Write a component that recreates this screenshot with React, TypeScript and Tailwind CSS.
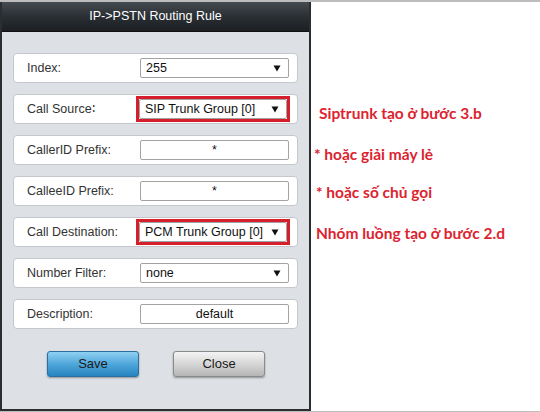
import type { ReactNode } from 'react';

type Row = {
  label: string;
  value: string;
  kind: 'select' | 'text';
  marked?: boolean;
};

const rows: Row[] = [
  { label: 'Index:', value: '255', kind: 'select' },
  { label: 'Call Source\u2236', value: 'SIP Trunk Group [0]', kind: 'select', marked: true },
  { label: 'CallerID Prefix:', value: '*', kind: 'text' },
  { label: 'CalleeID Prefix:', value: '*', kind: 'text' },
  { label: 'Call Destination:', value: 'PCM Trunk Group [0]', kind: 'select', marked: true },
  { label: 'Number Filter:', value: 'none', kind: 'select' },
  { label: 'Description:', value: 'default', kind: 'text' },
];

function Arrow() {
  return (
    <svg width="8" height="7" viewBox="0 0 8 7" className="shrink-0">
      <path d="M0.5 0.5 H7.5 L4 6.5 Z" fill="#111" />
    </svg>
  );
}

function Field({ row }: { row: Row }) {
  const box = 'h-[20px] w-[149px] bg-white border border-[#a3a3a3] rounded-[2px] flex items-center text-[12.5px] text-[#111]';
  let inner: ReactNode;
  if (row.kind === 'select') {
    inner = (
      <div className={`${box} pl-[5px] pr-[7px] justify-between`}>
        <span>{row.value}</span>
        <Arrow />
      </div>
    );
  } else {
    inner = <div className={`${box} justify-center`}>{row.value}</div>;
  }
  if (row.marked) {
    return (
      <div className="-ml-[4px] border-[3px] border-[#d61f2c]">
        <div className="[&>div]:w-[148px]">{inner}</div>
      </div>
    );
  }
  return inner;
}

const notes = [
  { text: 'Siptrunk tạo ở bước 3.b', mt: 'mt-[101px]', ml: 'ml-[8px]' },
  { text: '* hoặc giải máy lẻ', mt: 'mt-[21px]', ml: 'ml-[3px]' },
  { text: '* hoặc số chủ gọi', mt: 'mt-[18px]', ml: 'ml-[5px]' },
  { text: 'Nhóm luồng tạo ở bước 2.d', mt: 'mt-[21px]', ml: 'ml-[5px]' },
];

export default function App() {
  return (
    <div className="w-[540px] h-[412px] bg-white overflow-hidden flex flex-col" style={{ fontFamily: 'Arial, "Liberation Sans", sans-serif' }}>
      <div className="h-[2px] bg-[#bdbdbd] shrink-0" />
      <div className="flex flex-1 min-h-0">
        {/* dialog */}
        <div className="w-[311px] h-[409px] border-x-2 border-b-2 border-[#2b2e31] bg-[#dde1e5] flex flex-col shrink-0">
          <div className="h-[30px] bg-gradient-to-b from-[#464b51] via-[#2a2f34] to-[#1b1f23] flex items-center justify-center text-white text-[12.5px] border-b border-[#111]">
            IP-&gt;PSTN Routing Rule
          </div>
          <div className="flex flex-col gap-[11px] px-[11px] pt-[21px]">
            {rows.map((r) => (
              <div key={r.label} className="h-[30px] bg-white border border-[#c4c8cc] rounded-[4px] flex items-center pl-[13px]">
                <div className="w-[113px] text-[12.5px] text-[#333]">{r.label}</div>
                <Field row={r} />
              </div>
            ))}
          </div>
          <div className="flex pl-[45px] gap-[34px] mt-[22px]">
            <button className="w-[92px] h-[26px] rounded-[3px] border border-[#2a6f9f] bg-gradient-to-b from-[#8fd0f2] via-[#4ea7da] to-[#2784c0] text-[13px] text-[#1a1a1a] shadow-[0_1px_2px_rgba(0,0,0,0.35)]">
              Save
            </button>
            <button className="w-[92px] h-[26px] rounded-[3px] border border-[#8a8a8a] bg-gradient-to-b from-[#f4f4f4] via-[#d6d6d6] to-[#b5b5b5] text-[13px] text-[#1a1a1a] shadow-[0_1px_2px_rgba(0,0,0,0.35)]">
              Close
            </button>
          </div>
        </div>
        {/* notes */}
        <div className="flex flex-col">
          {notes.map((n) => (
            <div key={n.text} className={`${n.mt} ${n.ml} h-[20px] leading-[20px] text-[15.5px] font-bold text-[#dc2430] whitespace-nowrap`} style={{ fontFamily: 'Lato, "Open Sans", sans-serif' }}>
              {n.text}
            </div>
          ))}
        </div>
      </div>
      <div className="h-[1px] bg-[#bdbdbd] shrink-0" />
    </div>
  );
}
